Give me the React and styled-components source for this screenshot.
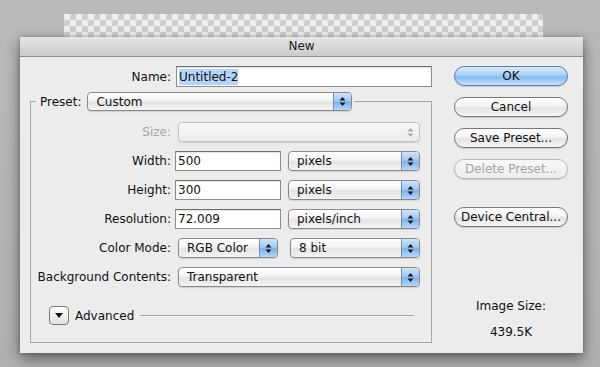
import React from "react";
import styled, { createGlobalStyle } from "styled-components";

const GlobalStyle = createGlobalStyle`
  body {
    margin: 0;
    background: #b4b4b4;
    font-family: "DejaVu Sans", "Liberation Sans", sans-serif;
    font-size: 12px;
    color: #111;
  }
`;

const Arrows = ({ disabled }) => (
  <svg width="7" height="11" viewBox="0 0 7 11">
    <polygon points="0.5,4.5 3.5,1 6.5,4.5" fill={disabled ? "#a8a8a8" : "#1a1a1a"} />
    <polygon points="0.5,6.5 3.5,10 6.5,6.5" fill={disabled ? "#a8a8a8" : "#1a1a1a"} />
  </svg>
);

const Popup = ({ children, width, disabled, height, ml }) => (
  <PopupBox $w={width} $h={height} $ml={ml} $disabled={disabled}>
    <PopupText>{children}</PopupText>
    <ArrowCap $disabled={disabled}>
      <Arrows disabled={disabled} />
    </ArrowCap>
  </PopupBox>
);

const App = () => {
  return (
    <Page>
      <GlobalStyle />
      <Canvas />
      <Dialog>
        <TitleBar>New</TitleBar>
        <Body>
          <FormCol>
            <NameRow>
              <Label $w={146}>Name:</Label>
              <TextInput $w={256} $h={21}>
                <Selected>Untitled-2</Selected>
              </TextInput>
            </NameRow>

            <Group>
              <Legend>
                <LegendLabel>Preset:</LegendLabel>
                <Popup width={265} height={19}>Custom</Popup>
              </Legend>

              <Rows>
                <Row>
                  <Label $disabled>Size:</Label>
                  <Popup width={242} ml={3} disabled />
                </Row>
                <Row>
                  <Label>Width:</Label>
                  <TextInput $w={106}>500</TextInput>
                  <Popup width={132} ml={7}>pixels</Popup>
                </Row>
                <Row>
                  <Label>Height:</Label>
                  <TextInput $w={106}>300</TextInput>
                  <Popup width={132} ml={7}>pixels</Popup>
                </Row>
                <Row>
                  <Label>Resolution:</Label>
                  <TextInput $w={106}>72.009</TextInput>
                  <Popup width={132} ml={7}>pixels/inch</Popup>
                </Row>
                <Row>
                  <Label>Color Mode:</Label>
                  <Popup width={100} ml={3}>RGB Color</Popup>
                  <Popup width={130} ml={12}>8 bit</Popup>
                </Row>
                <Row>
                  <Label>Background Contents:</Label>
                  <Popup width={242} ml={3}>Transparent</Popup>
                </Row>
              </Rows>

              <AdvancedRow>
                <Disclosure>
                  <svg width="8" height="5" viewBox="0 0 8 5">
                    <polygon points="0,0 8,0 4,5" fill="#111" />
                  </svg>
                </Disclosure>
                <span>Advanced</span>
                <Rule />
              </AdvancedRow>
            </Group>
          </FormCol>

          <ButtonCol>
            <PillButton $primary>OK</PillButton>
            <PillButton>Cancel</PillButton>
            <PillButton>Save Preset...</PillButton>
            <PillButton $disabled>Delete Preset...</PillButton>
            <PillButton $gap={28}>Device Central...</PillButton>
            <ImageInfo>
              <div>Image Size:</div>
              <div>439.5K</div>
            </ImageInfo>
          </ButtonCol>
        </Body>
      </Dialog>
    </Page>
  );
};

export default App;

const Page = styled.div`
  width: 600px;
  height: 367px;
  overflow: hidden;
  box-sizing: border-box;
  padding-top: 14px;
  background: linear-gradient(#bababa, #b0b0b0);
`;

const Canvas = styled.div`
  margin-left: 64px;
  width: 479px;
  height: 23px;
  background-color: #eeeeee;
  background-image: conic-gradient(#cfcfcf 25%, #eeeeee 0 50%, #cfcfcf 0 75%, #eeeeee 0);
  background-size: 12px 12px;
`;

const Dialog = styled.div`
  margin-left: 20px;
  width: 563px;
  height: 316px;
  background: #ececec;
  box-shadow: 0 6px 14px rgba(0, 0, 0, 0.45), 0 0 4px rgba(0, 0, 0, 0.25);
  display: flex;
  flex-direction: column;
`;

const TitleBar = styled.div`
  height: 19px;
  line-height: 19px;
  text-align: center;
  font-size: 12px;
  color: #222;
  background: linear-gradient(#e6e6e6, #cbcbcb);
  border-bottom: 1px solid #8e8e8e;
`;

const Body = styled.div`
  display: flex;
  padding: 9px 0 0 10px;
`;

const FormCol = styled.div`
  width: 402px;
  display: flex;
  flex-direction: column;
`;

const NameRow = styled.div`
  display: flex;
  align-items: center;
  height: 21px;
`;

const Label = styled.div`
  width: ${(p) => p.$w || 144}px;
  flex: none;
  text-align: right;
  padding-right: ${(p) => (p.$w ? p.$w - 141 : 4)}px;
  box-sizing: border-box;
  white-space: nowrap;
  color: ${(p) => (p.$disabled ? "#a6a6a6" : "#111")};
`;

const TextInput = styled.div`
  width: ${(p) => p.$w}px;
  height: ${(p) => p.$h || 20}px;
  box-sizing: border-box;
  flex: none;
  background: #fff;
  border: 1px solid #8d8d8d;
  border-top-color: #6e6e6e;
  box-shadow: inset 0 1px 1px rgba(0, 0, 0, 0.12);
  padding: 0 2px;
  display: flex;
  align-items: center;
`;

const Selected = styled.span`
  background: #b5d4fd;
  padding: 1px 0;
`;

const Group = styled.fieldset`
  margin: 5px 0 0;
  padding: 0 0 17px 0;
  border: 1px solid #a5a5a5;
  min-width: 0;
`;

const Legend = styled.legend`
  display: flex;
  align-items: center;
  margin-left: 5px;
  padding: 0 3px 0 4px;
`;

const LegendLabel = styled.span`
  margin-right: 6px;
`;

const PopupBox = styled.div`
  width: ${(p) => p.$w}px;
  height: ${(p) => p.$h || 20}px;
  margin-left: ${(p) => p.$ml || 0}px;
  flex: none;
  box-sizing: border-box;
  display: flex;
  border: 1px solid ${(p) => (p.$disabled ? "#c4c4c4" : "#8a8a8a")};
  border-radius: 4px;
  background: ${(p) =>
    p.$disabled
      ? "linear-gradient(#f7f7f7, #ececec)"
      : "linear-gradient(#ffffff 0%, #f3f3f3 45%, #e3e3e3 55%, #f4f4f4 100%)"};
  box-shadow: 0 1px 1px rgba(0, 0, 0, 0.12);
  overflow: hidden;
`;

const PopupText = styled.div`
  flex: 1;
  padding-left: 8px;
  display: flex;
  align-items: center;
  white-space: nowrap;
`;

const ArrowCap = styled.div`
  width: 17px;
  flex: none;
  display: flex;
  align-items: center;
  justify-content: center;
  border-left: 1px solid ${(p) => (p.$disabled ? "transparent" : "#6d8fbd")};
  background: ${(p) =>
    p.$disabled
      ? "transparent"
      : "linear-gradient(#cfe4fa 0%, #a3c9f1 45%, #7fb2ea 55%, #b6d8fa 100%)"};
`;

const Rows = styled.div`
  display: flex;
  flex-direction: column;
  gap: 9px;
  margin-top: 11px;
`;

const Row = styled.div`
  display: flex;
  align-items: center;
  height: 20px;
`;

const AdvancedRow = styled.div`
  display: flex;
  align-items: center;
  margin: 19px 17px 0 18px;
  height: 19px;
  gap: 6px;
`;

const Disclosure = styled.div`
  width: 20px;
  height: 19px;
  box-sizing: border-box;
  border: 1px solid #7a7a7a;
  border-radius: 4px;
  background: linear-gradient(#ffffff, #e2e2e2);
  display: flex;
  align-items: center;
  justify-content: center;
`;

const Rule = styled.div`
  flex: 1;
  height: 0;
  border-top: 1px solid #a3a3a3;
  border-bottom: 1px solid #f8f8f8;
`;

const ButtonCol = styled.div`
  width: 114px;
  margin-left: 22px;
  display: flex;
  flex-direction: column;
  align-items: stretch;
`;

const PillButton = styled.div`
  height: 20px;
  box-sizing: border-box;
  margin-bottom: 11px;
  margin-top: ${(p) => (p.$gap ? p.$gap - 11 : 0)}px;
  border-radius: 10px;
  border: 1px solid ${(p) => (p.$primary ? "#5b7fa8" : p.$disabled ? "#b9b9b9" : "#777")};
  display: flex;
  align-items: center;
  justify-content: center;
  color: ${(p) => (p.$disabled ? "#a4a4a4" : "#111")};
  background: ${(p) =>
    p.$primary
      ? "linear-gradient(#d8eafc 0%, #a9d0f5 45%, #86bbf0 55%, #c6e3fd 100%)"
      : p.$disabled
      ? "linear-gradient(#f8f8f8, #ededed)"
      : "linear-gradient(#ffffff 0%, #f4f4f4 45%, #e2e2e2 55%, #f6f6f6 100%)"};
  box-shadow: 0 1px 1px rgba(0, 0, 0, 0.15);
  white-space: nowrap;
`;

const ImageInfo = styled.div`
  margin-top: 55px;
  text-align: center;
  line-height: 26px;
`;
